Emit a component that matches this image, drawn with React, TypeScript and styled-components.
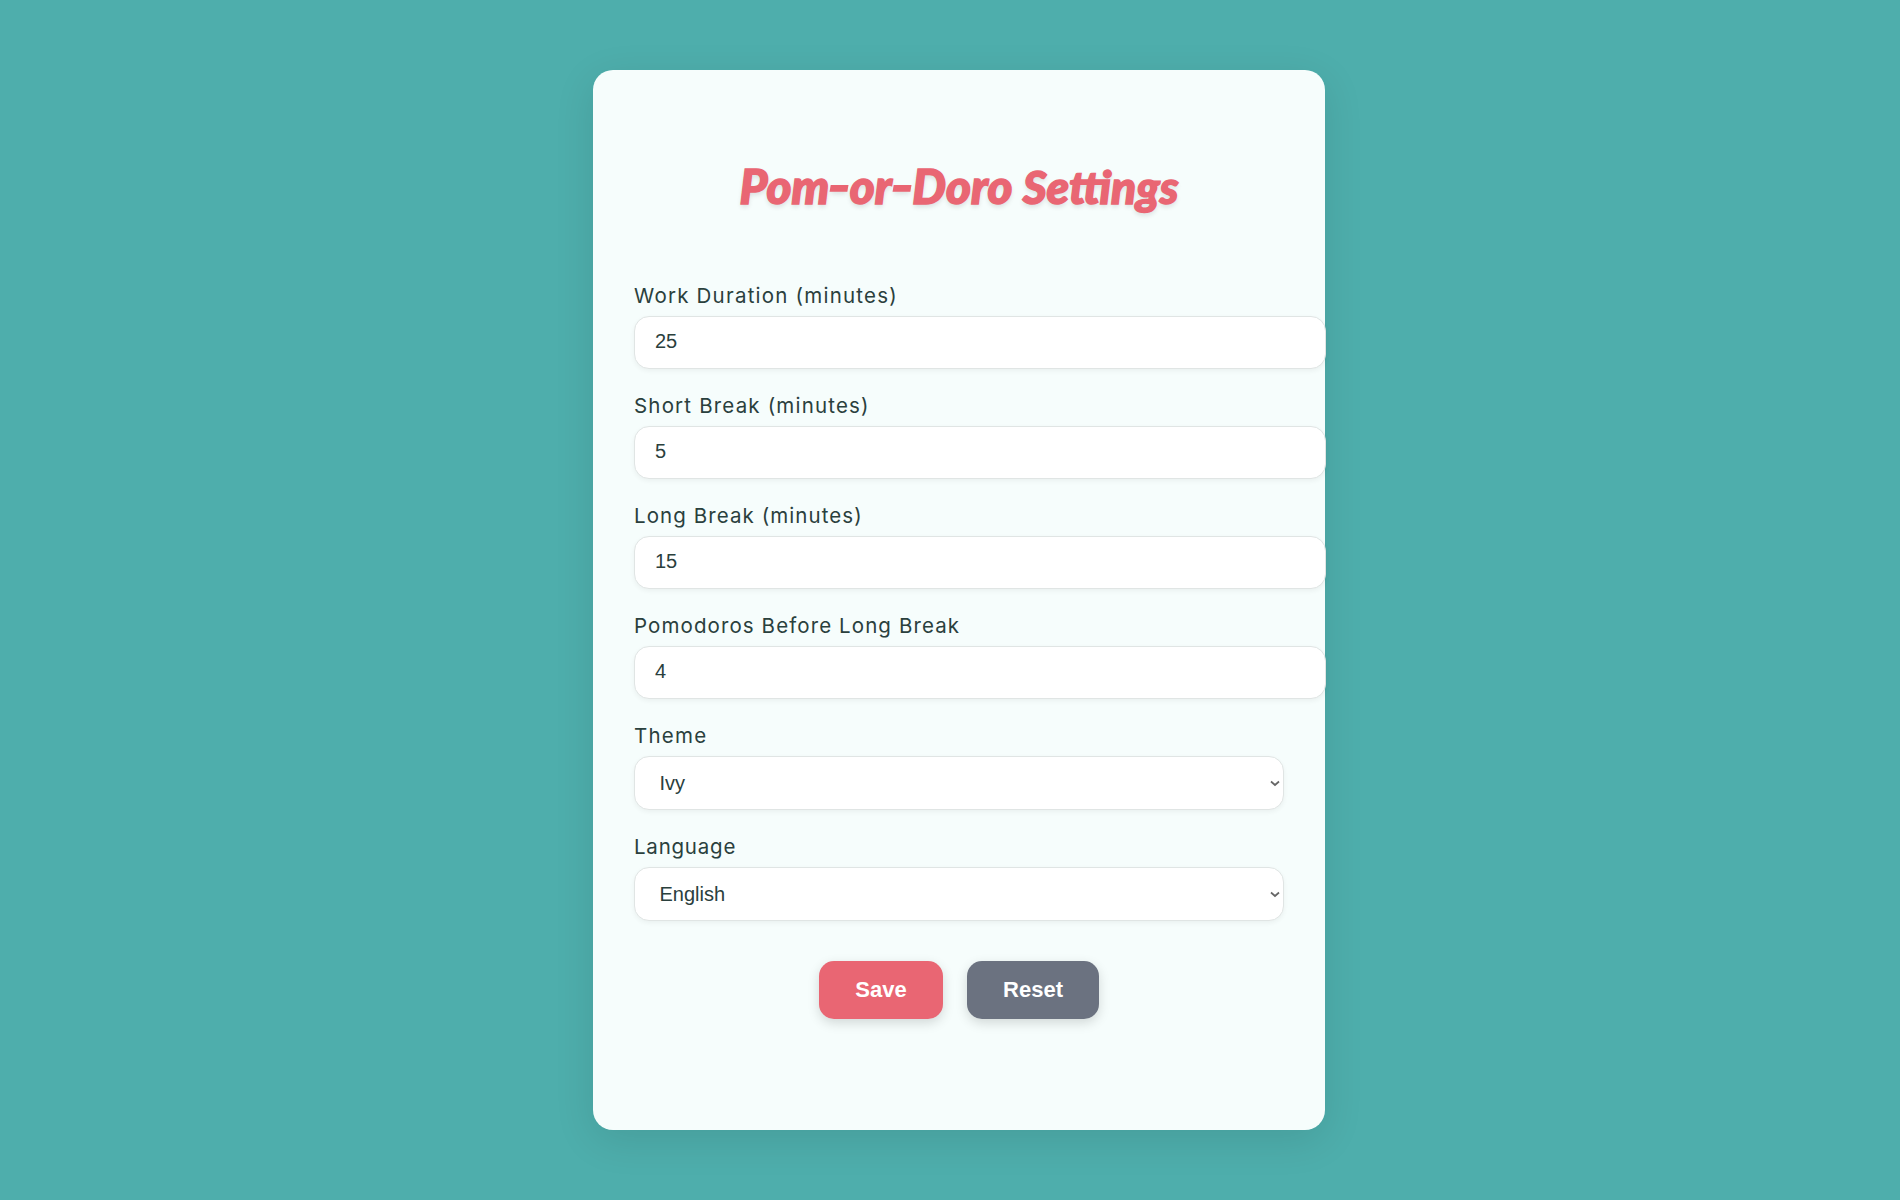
import React, { useState } from "react";
import styled, { createGlobalStyle } from "styled-components";

const GlobalStyle = createGlobalStyle`
  body {
    margin: 0;
    background: #4eaeac;
    color: #2a403d;
    font-family: "Liberation Sans", Arial, sans-serif;
  }
`;

const Page = styled.main`
  min-height: 1200px;
  padding: 70px 0 70px 18px;
  box-sizing: border-box;
  display: flex;
  justify-content: center;
  align-items: flex-start;
`;

const Card = styled.section`
  width: 732px;
  height: 1060px;
  box-sizing: border-box;
  padding: 82px 41px 0;
  border-radius: 20px;
  background: #f6fdfc;
  box-shadow: 0 10px 40px rgba(0, 0, 0, 0.1);
`;

const Title = styled.h1`
  margin: 0;
  height: 124px;
  line-height: 67px;
  text-align: center;
  white-space: nowrap;
  color: #e96673;
  font-family: Lato, sans-serif;
  font-size: 47.6px;
  font-weight: 900;
  font-style: italic;
  -webkit-text-stroke: 1.5px #e96673;
  text-shadow: 0 3px 5px rgba(0, 0, 0, 0.12);
`;

const Part = styled.span<{ $size: number }>`
  font-size: ${(p) => p.$size}px;
`;

const Dash = styled.span`
  display: inline-block;
  margin: 0 2px;
  transform: translateY(-1.5px) scaleX(1.35);
`;

const Form = styled.form`
  display: flex;
  flex-direction: column;
`;

const Field = styled.div`
  display: flex;
  flex-direction: column;
  margin-bottom: 17px;
`;

const Label = styled.label<{ $spacing: number }>`
  height: 37px;
  padding-top: 4px;
  box-sizing: border-box;
  margin-bottom: 3px;
  line-height: 32px;
  font-family: Inter, sans-serif;
  font-size: 20.5px;
  font-weight: 400;
  letter-spacing: ${(p) => p.$spacing}px;
  white-space: nowrap;
`;

const controlBase = `
  width: 650px;
  border: 1px solid #e0e5e4;
  border-radius: 15px;
  background: #fff;
  color: #2a403d;
  font-family: "Liberation Sans", Arial, sans-serif;
  font-size: 20px;
  box-shadow: 0 2px 5px rgba(0, 0, 0, 0.05);
  outline: none;
`;

const Input = styled.input`
  ${controlBase}
  box-sizing: content-box;
  height: 23px;
  padding: 13px 20px 15px;
`;

const SelectBox = styled.div`
  position: relative;
  width: 650px;
  height: 54px;
`;

const Select = styled.select`
  ${controlBase}
  appearance: none;
  box-sizing: border-box;
  height: 54px;
  padding: 0 24px 0 24.5px;
`;

const Chevron = styled.svg`
  position: absolute;
  right: 4px;
  top: 24px;
  width: 10px;
  height: 7px;
  pointer-events: none;
`;

const Actions = styled.div`
  display: flex;
  justify-content: center;
  gap: 24px;
  margin-top: 23px;
`;

const Button = styled.button<{ $color: string; $width: number }>`
  width: ${(p) => p.$width}px;
  height: 58px;
  padding: 0;
  border: 0;
  border-radius: 15px;
  background: ${(p) => p.$color};
  color: #fff;
  font-family: "Liberation Sans", Arial, sans-serif;
  font-size: 22px;
  font-weight: 700;
  box-shadow: 0 4px 12px rgba(0, 0, 0, 0.15);
`;

const durations = [
  { id: "work", label: "Work Duration (minutes)", value: "25", spacing: 1.22 },
  { id: "short", label: "Short Break (minutes)", value: "5", spacing: 1.18 },
  { id: "long", label: "Long Break (minutes)", value: "15", spacing: 1.08 },
  { id: "count", label: "Pomodoros Before Long Break", value: "4", spacing: 1.1 },
];

const choices = [
  { id: "theme", label: "Theme", option: "Ivy", spacing: 1.25 },
  { id: "language", label: "Language", option: "English", spacing: 0.77 },
];

export default function App() {
  const [values, setValues] = useState(durations.map((d) => d.value));
  return (
    <>
      <GlobalStyle />
      <Page>
        <Card>
          <Title>
            Pom<Dash>-</Dash>or<Dash>-</Dash>Doro <Part $size={46.1}>Settings</Part>
          </Title>
          <Form onSubmit={(e) => e.preventDefault()}>
            {durations.map((d, i) => (
              <Field key={d.id}>
                <Label htmlFor={d.id} $spacing={d.spacing}>{d.label}</Label>
                <Input
                  id={d.id}
                  type="number"
                  value={values[i]}
                  onChange={(e) => setValues(values.map((v, j) => (j === i ? e.target.value : v)))}
                />
              </Field>
            ))}
            {choices.map((c) => (
              <Field key={c.id}>
                <Label htmlFor={c.id} $spacing={c.spacing}>{c.label}</Label>
                <SelectBox>
                  <Select id={c.id}><option>{c.option}</option></Select>
                  <Chevron viewBox="0 0 10 7">
                    <path d="M1 1.5 L5 5 L9 1.5" fill="none" stroke="#666" strokeWidth="1.7" />
                  </Chevron>
                </SelectBox>
              </Field>
            ))}
            <Actions>
              <Button type="submit" $color="#e96673" $width={124}>Save</Button>
              <Button type="button" $color="#6b7280" $width={132}>Reset</Button>
            </Actions>
          </Form>
        </Card>
      </Page>
    </>
  );
}
